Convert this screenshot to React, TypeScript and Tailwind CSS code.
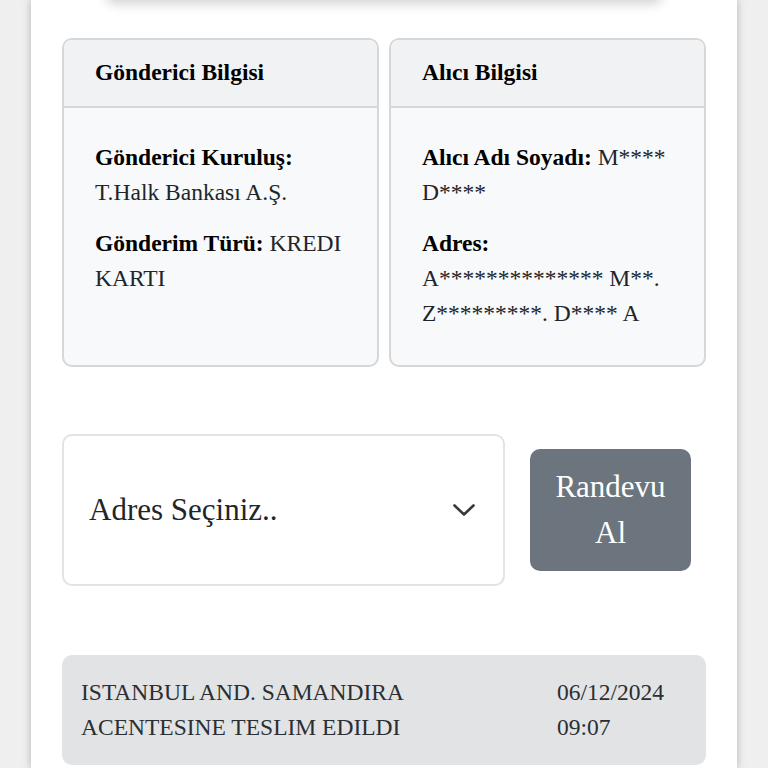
function InfoCard({ title, children }: { title: string; children: React.ReactNode }) {
  return (
    <div className="flex flex-col overflow-hidden rounded-[10px] border-2 border-[#d6d7d9] bg-[#f8f9fa]">
      <div className="flex h-[68px] items-center border-b-2 border-[#d6d7d9] bg-[#f1f2f4] px-[31px]">
        <h3 className="text-[23.5px] font-bold text-black">{title}</h3>
      </div>
      <div className="flex-1 space-y-[16px] px-[31px] pb-[34px] pt-[32px] text-[23.5px] leading-[35px] text-[#212529]">
        {children}
      </div>
    </div>
  );
}

export default function App() {
  return (
    <div
      className="min-h-[768px] bg-[#efefef] px-[31px]"
      style={{ fontFamily: '"Liberation Serif", "Times New Roman", serif' }}
    >
      <div className="h-[768px] overflow-hidden bg-white px-[31px] shadow-[0_0_8px_rgba(0,0,0,0.25)]">
        <div className="mx-[43px] -mt-[40px] h-[40px] rounded-[12px] bg-white shadow-[0_4px_12px_rgba(0,0,0,0.18)]" />

        <div className="mt-[38px] grid grid-cols-2 gap-[10px]">
          <InfoCard title="Gönderici Bilgisi">
            <p>
              <b className="text-black">Gönderici Kuruluş:</b>
              <br />
              T.Halk Bankası A.Ş.
            </p>
            <p>
              <b className="text-black">Gönderim Türü:</b> KREDI KARTI
            </p>
          </InfoCard>
          <InfoCard title="Alıcı Bilgisi">
            <p>
              <b className="text-black">Alıcı Adı Soyadı:</b> M**** D****
            </p>
            <p>
              <b className="text-black">Adres:</b>
              <br />
              A************** M**. Z*********. D**** A
            </p>
          </InfoCard>
        </div>

        <div className="mt-[67px] flex items-center gap-[25px] pr-[15px]">
          <div className="flex h-[152px] flex-1 items-center justify-between rounded-[10px] border-2 border-[#e3e3e3] bg-white pl-[25px] pr-[28px]">
            <span className="text-[31px] text-[#212529]">Adres Seçiniz..</span>
            <svg width="22" height="12" viewBox="0 0 22 12" fill="none" className="text-[#343a40]">
              <path d="M1.5 1.5 11 10.5 20.5 1.5" stroke="currentColor" strokeWidth="2.6" strokeLinecap="round" strokeLinejoin="round" />
            </svg>
          </div>
          <button className="h-[122px] w-[161px] rounded-[10px] bg-[#6c757d] text-[31px] leading-[46px] text-white">
            Randevu
            <br />
            Al
          </button>
        </div>

        <div className="mt-[69px] flex items-start justify-between rounded-[10px] bg-[#e2e3e5] py-[20px] pl-[19px] pr-[42px] text-[23.5px] leading-[35px] text-[#2b2f32]">
          <span>
            ISTANBUL AND. SAMANDIRA
            <br />
            ACENTESINE TESLIM EDILDI
          </span>
          <span>
            06/12/2024
            <br />
            09:07
          </span>
        </div>
      </div>
    </div>
  );
}
